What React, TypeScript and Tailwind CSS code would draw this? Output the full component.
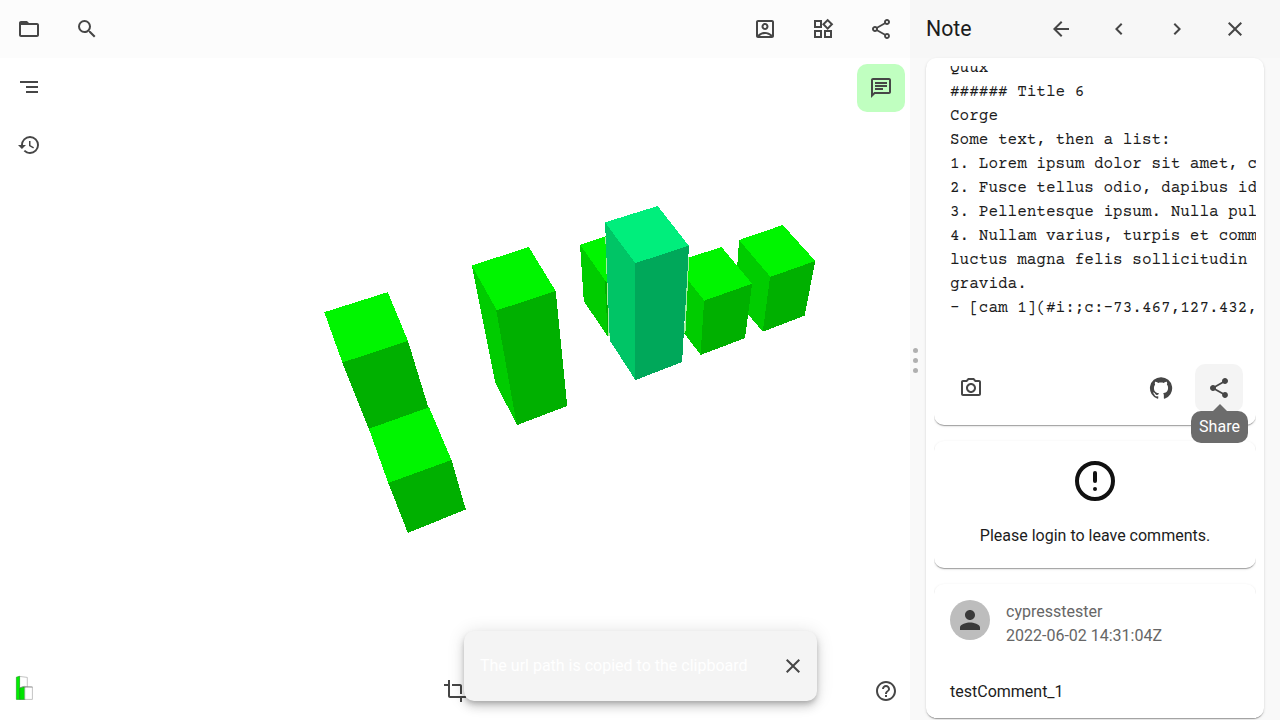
import type { ReactNode } from 'react'
import {
  MdArrowBack,
  MdChevronLeft,
  MdChevronRight,
  MdClose,
  MdCrop,
  MdFolderOpen,
  MdHelpOutline,
  MdHistory,
  MdOutlineAccountBox,
  MdOutlineChat,
  MdOutlinePhotoCamera,
  MdOutlineShare,
  MdOutlineWidgets,
  MdPerson,
  MdSearch,
  MdSegment,
  MdShare,
} from 'react-icons/md'

const NOTE_LINES = [
  'Quux',
  '###### Title 6',
  'Corge',
  'Some text, then a list:',
  '1. Lorem ipsum dolor sit amet, c',
  '2. Fusce tellus odio, dapibus id',
  '3. Pellentesque ipsum. Nulla pul',
  '4. Nullam varius, turpis et comm',
  'luctus magna felis sollicitudin',
  'gravida.',
  '- [cam 1](#i:;c:-73.467,127.432,',
]

function IconButton({ label, className = '', children }: { label: string; className?: string; children: ReactNode }) {
  return (
    <button
      aria-label={label}
      className={`flex size-12 shrink-0 items-center justify-center rounded-[10px] text-2xl text-[#464646] ${className}`}
    >
      {children}
    </button>
  )
}

function Card({ className = '', children }: { className?: string; children: ReactNode }) {
  return (
    <section
      className={`shrink-0 rounded-[10px] bg-white shadow-[0_2px_1px_-1px_rgba(0,0,0,0.2),0_1px_1px_0_rgba(0,0,0,0.14),0_1px_3px_0_rgba(0,0,0,0.12)] ${className}`}
    >
      {children}
    </section>
  )
}

function GitHubIcon() {
  return (
    <svg viewBox="0 0 24 24" className="size-6" fill="currentColor">
      <path d="M12 1.27a11 11 0 00-3.48 21.46c.55.09.73-.28.73-.55v-1.84c-3.03.64-3.67-1.46-3.67-1.46-.55-1.29-1.28-1.65-1.28-1.65-.92-.65.1-.65.1-.65 1.1 0 1.73 1.1 1.73 1.1.92 1.65 2.57 1.2 3.21.92a2 2 0 01.64-1.47c-2.47-.27-5.04-1.19-5.04-5.5 0-1.1.46-2.1 1.2-2.84a3.76 3.76 0 010-2.93s.91-.28 3.11 1.1c1.8-.49 3.7-.49 5.5 0 2.1-1.38 3.02-1.1 3.02-1.1a3.76 3.76 0 01.1 2.93c.83.74 1.2 1.74 1.2 2.94 0 4.21-2.57 5.13-5.04 5.4.45.37.82.92.82 2.02v3.03c0 .27.1.64.73.55A11 11 0 0012 1.27" />
    </svg>
  )
}

function Model() {
  return (
    <svg viewBox="0 0 910 720" className="absolute inset-0 h-[720px] w-[910px]" shapeRendering="crispEdges">
      <g transform="translate(-0.2 0)">
        <g fill="#00f500">
          <polygon points="324.5,312.2 388,292.1 408.2,341 342.5,362.5" />
          <polygon points="369,428.5 429,406.7 451.7,460 388.5,483.2" />
          <polygon points="472,265.5 529,247 555.9,291 496.5,310.5" />
          <polygon points="580,245 606,236.3 612,290" />
          <polygon points="739.3,240 783,225 815.5,261 770.3,277" />
        </g>
        <g fill="#00cc00">
          <polygon points="472,265.5 497,310.3 517.3,425.3 495.5,382.5" />
          <polygon points="580.2,244.6 612,290 608,336.8 584,301" />
          <polygon points="739.3,240 770.5,276.8 763,331.5 735,299" />
        </g>
        <g fill="#00b000">
          <polygon points="342.5,362.5 408.2,341 428.6,407.5 369,428.8" />
          <polygon points="388.5,483 451.7,460 466,509.5 408,532.9" />
          <polygon points="496.5,310.5 555.9,291 567.4,406 517,425.2" />
          <polygon points="770.3,277 815.5,261 804.8,315.7 763,331.7" />
          <polygon points="605,280 608,284 609,336 608,337" />
        </g>
        <polygon fill="#00f500" points="686,258.5 721.7,247 752.3,283.7 704.3,300.9 686,278" />
        <polygon fill="#00cc00" points="686,277.5 704.5,300.5 700.9,354.9 684.5,333.5" />
        <polygon fill="#00b000" points="704.3,300.7 752.3,283.7 745.2,338.2 700.7,354.9" />
        <path d="M606.2 237L609.4 336M688.7 257L684.9 333" stroke="#a0eea0" strokeWidth="1.4" />
        <polygon fill="#00ee7c" points="605.3,222.3 657.9,206 689.2,246 635,263.5" />
        <polygon fill="#00c566" points="605.3,222.5 635.4,263 635.7,380.2 610,340.5" />
        <polygon fill="#00a85a" points="635,263.3 689.2,245.7 682.3,362 635.5,380.2" />
      </g>
    </svg>
  )
}

function Logo() {
  return (
    <svg viewBox="0 0 20 28" className="h-7 w-5" strokeWidth="0.7">
      <path d="M5.4 2.4L13.3 3.4V24H5.4z" fill="#fff" stroke="#aaa" />
      <path d="M2.4 3.2L5.6 2.3V25.4H2.4z" fill="#00f000" stroke="#20a820" />
      <path d="M5.7 14L9 13h2.2v12.4H5.7z" fill="#00e400" stroke="#209020" />
      <path d="M10.8 13.4l7.6-.4v12.4h-7.6z" fill="#fff" stroke="#aaa" />
      <path d="M5.7 13.8l4.6-1.4 8.1.6" fill="none" stroke="#888" />
    </svg>
  )
}

function Viewer() {
  return (
    <main className="relative flex h-full w-[910px] shrink-0 flex-col bg-white">
      <Model />
      <header className="flex h-[58px] shrink-0 items-center bg-[#fcfcfc] px-[5px]">
        <div className="flex gap-[10px]">
          <IconButton label="Open"><MdFolderOpen /></IconButton>
          <IconButton label="Search"><MdSearch /></IconButton>
        </div>
        <div className="ml-auto flex gap-[10px]">
          <IconButton label="Profile"><MdOutlineAccountBox /></IconButton>
          <IconButton label="Apps"><MdOutlineWidgets /></IconButton>
          <IconButton label="Share"><MdOutlineShare /></IconButton>
        </div>
      </header>
      <div className="flex flex-1 justify-between px-[5px]">
        <nav className="flex flex-col gap-[10px] pt-[5px]">
          <IconButton label="Navigation"><MdSegment /></IconButton>
          <IconButton label="History"><MdHistory /></IconButton>
        </nav>
        <nav className="pt-1.5">
          <IconButton label="Notes" className="bg-[#c0ffc0]"><MdOutlineChat /></IconButton>
        </nav>
      </div>
      <footer className="flex h-[58px] shrink-0 items-center justify-between">
        <div className="flex w-12 justify-center pb-[6px]"><Logo /></div>
        <IconButton label="Section"><MdCrop /></IconButton>
        <IconButton label="Help"><MdHelpOutline /></IconButton>
      </footer>
      <div className="absolute top-[631px] left-[464px] flex h-[70px] w-[353px] items-center justify-between rounded-[10px] bg-[#f4f4f4] pl-4 shadow-[0_3px_5px_-1px_rgba(0,0,0,0.2),0_6px_10px_0_rgba(0,0,0,0.14),0_1px_18px_0_rgba(0,0,0,0.12)]">
        <span className="whitespace-nowrap text-base text-white">The url path is copied to the clipboard</span>
        <IconButton label="Close" className="mr-[0.4px]"><MdClose /></IconButton>
      </div>
    </main>
  )
}

function NotePanel() {
  return (
    <aside className="flex h-full min-w-0 flex-1 bg-[#f9f9f9]">
      <div className="flex w-4 shrink-0 flex-col items-center justify-center gap-[5px] pr-[5px]">
        <i className="size-[5px] rounded-full bg-[#b0b0b0]" />
        <i className="size-[5px] rounded-full bg-[#b0b0b0]" />
        <i className="size-[5px] rounded-full bg-[#b0b0b0]" />
      </div>
      <div className="flex min-w-0 flex-1 flex-col">
        <header className="-ml-4 flex h-[58px] shrink-0 items-center justify-between bg-[#f7f7f7] pr-[21px] pl-4">
          <h1 className="text-[21.3px]/[28px] text-[#1c1c1c]">Note</h1>
          <div className="flex gap-[10px]">
            <IconButton label="Back"><MdArrowBack /></IconButton>
            <IconButton label="Previous"><MdChevronLeft /></IconButton>
            <IconButton label="Next"><MdChevronRight /></IconButton>
            <IconButton label="Close"><MdClose /></IconButton>
          </div>
        </header>
        <div className="mr-4 h-[660px] rounded-[10px] bg-white p-2 pb-0 shadow-[0_2px_1px_-1px_rgba(0,0,0,0.2),0_1px_1px_0_rgba(0,0,0,0.14),0_1px_3px_0_rgba(0,0,0,0.12)]">
          <div className="flex h-[652px] flex-col gap-4 overflow-hidden">
            <Card className="relative h-[359px] !rounded-t-none">
              <div className="h-[289px] overflow-hidden pl-4">
                <pre className="-mt-[10px] font-['Courier_Prime','Nimbus_Mono_PS','Courier_New','Liberation_Mono',monospace] text-base/6 text-[#1c1c1c]">
                  {NOTE_LINES.join('\n')}
                </pre>
              </div>
              <div className="flex items-center px-[13px] pt-[9px]">
                <IconButton label="Screenshot"><MdOutlinePhotoCamera /></IconButton>
                <IconButton label="GitHub" className="mr-[10px] ml-auto"><GitHubIcon /></IconButton>
                <IconButton label="Share note" className="bg-[#f4f4f4]"><MdShare /></IconButton>
              </div>
              <div className="absolute top-[345px] left-[257px] z-10 flex h-8 w-[57px] items-center justify-center rounded-[10px] bg-[#6c6c6c] text-base text-white">
                <svg viewBox="0 0 16 8" className="absolute -top-[7px] left-[21px] h-2 w-4" fill="#6c6c6c">
                  <path d="M0 8L8 0L16 8z" />
                </svg>
                Share
              </div>
            </Card>
            <Card className="flex h-[127px] flex-col items-center">
              <svg viewBox="0 0 48 48" className="mt-4 size-12" fill="#111">
                <circle cx="24" cy="24" r="18" fill="none" stroke="#111" strokeWidth="4" />
                <rect x="22" y="14" width="4" height="12" rx="2" />
                <circle cx="24" cy="32" r="2" />
              </svg>
              <p className="mt-[19px] text-base/6 text-[#1c1c1c]">Please login to leave comments.</p>
            </Card>
            <Card className="h-[180px] px-4 pt-4">
              <div className="flex gap-4">
                <div className="flex size-10 items-center justify-center rounded-full bg-[#bdbdbd] text-[30px] text-[#3a3a3a]">
                  <MdPerson />
                </div>
                <div className="text-base/6 text-[#666]">
                  <div>cypresstester</div>
                  <div>2022-06-02 14:31:04Z</div>
                </div>
              </div>
              <p className="mt-8 text-base/6 text-[#1c1c1c]">testComment_1</p>
            </Card>
          </div>
        </div>
      </div>
    </aside>
  )
}

export default function App() {
  return (
    <div className="flex h-[720px] w-[1280px] overflow-hidden font-[Roboto,'Liberation_Sans',sans-serif]">
      <Viewer />
      <NotePanel />
    </div>
  )
}
